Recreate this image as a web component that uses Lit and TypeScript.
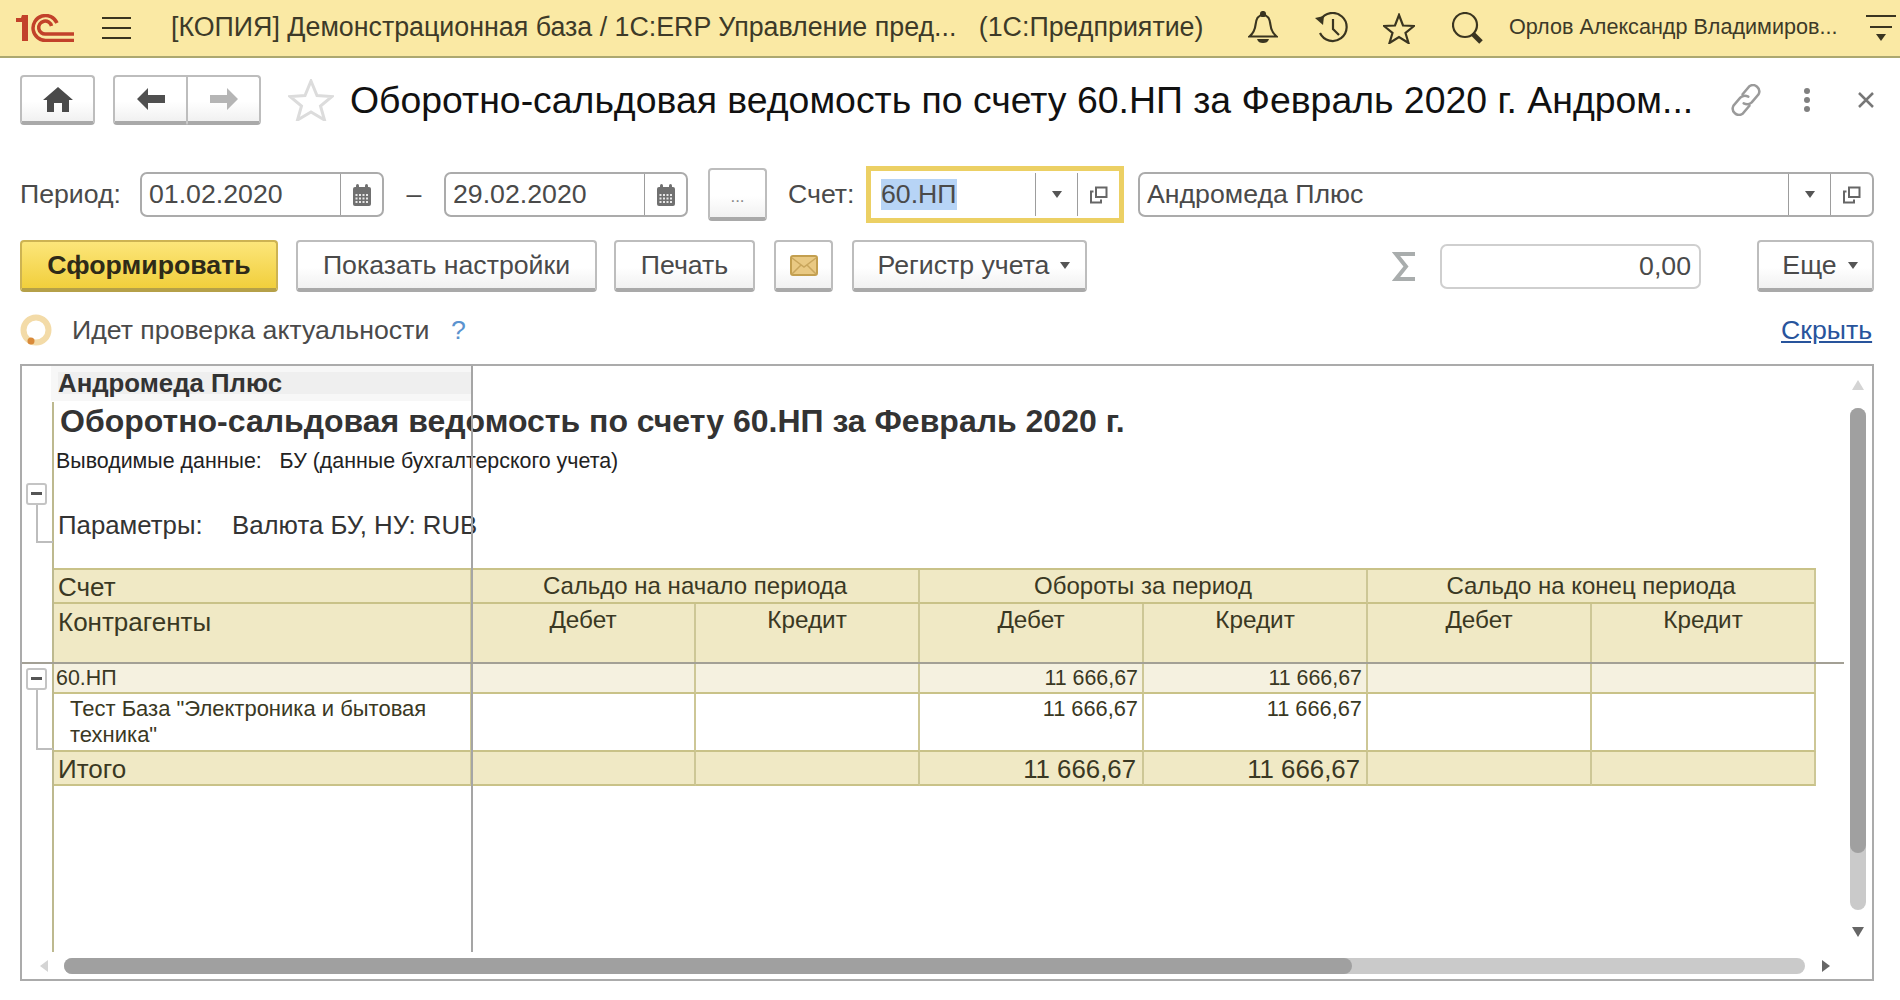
import { css, html, LitElement } from "lit";
import { customElement } from "lit/decorators.js";

const linkBox = html`<svg width="20" height="20" viewBox="0 0 20 20" fill="none" stroke="#666" stroke-width="2">
  <path d="M7 2.500h10.500v9.500h-10.500z" /><path d="M4.500 6.500h-2.500v11h10v-3" />
</svg>`;

const calendar = html`<svg width="18" height="24" viewBox="0 0 18 24">
  <path fill="#707070" d="M2 4h14a2 2 0 0 1 2 2v15a2 2 0 0 1-2 2h-14a2 2 0 0 1-2-2v-15a2 2 0 0 1 2-2z" />
  <rect x="3" y="1" width="3" height="6" rx="1.500" fill="#707070" />
  <rect x="12" y="1" width="3" height="6" rx="1.500" fill="#707070" />
  <path stroke="#e8e8e8" stroke-width="2" stroke-dasharray="2 1.500" d="M2.500 12h13M2.500 15.500h13M2.500 19h13" />
</svg>`;

const caret = html`<span class="caret"></span>`;

@customElement("app-root")
export class AppRoot extends LitElement {
  static get styles() {
    return css`
      :host {
        display: block;
        width: 1900px;
        height: 1000px;
        overflow: hidden;
        background: #fff;
        color: #4a4a4a;
        font-family: "Liberation Sans", Arial, sans-serif;
        font-size: 26.700px;
      }
      svg {
        display: block;
        flex: none;
      }
      .row {
        display: flex;
        align-items: center;
        padding-left: 20px;
        white-space: nowrap;
      }
      .caret {
        display: inline-block;
        flex: none;
        border: 5px solid transparent;
        border-top: 7px solid #555;
        border-bottom: 0;
      }

      /* top bar */
      .topbar {
        display: flex;
        align-items: center;
        height: 56px;
        padding-left: 16px;
        background: #fae9a4;
        border-bottom: 2px solid #aca870;
        color: #3d3a28;
        white-space: nowrap;
      }
      .burger {
        margin-left: 28px;
      }
      .app-title {
        flex: none;
        margin: -2px 0 0 39px;
        width: 1077px;
        font-size: 26.800px;
      }
      .clock {
        margin-left: 37px;
      }
      .fav {
        margin-left: 34px;
      }
      .find {
        margin-left: 37px;
      }
      .user {
        flex: none;
        margin: -2px 0 0 25px;
        width: 357px;
        font-size: 21.600px;
      }

      /* second row */
      .nav-row {
        margin-top: 17px;
        height: 50px;
      }
      .btn {
        display: flex;
        align-items: center;
        justify-content: center;
        box-sizing: border-box;
        height: 52px;
        flex: none;
        gap: 11px;
        background: linear-gradient(#fff 55%, #f1f1f1);
        border: 2px solid #bdbdbd;
        border-bottom: 4px solid #a9a9a9;
        border-radius: 4px;
        color: #4a4a4a;
      }
      .home {
        width: 75px;
        height: 50px;
      }
      .pair {
        display: flex;
        margin-left: 18px;
      }
      .pair .btn {
        width: 74px;
        height: 50px;
      }
      .pair .btn:first-child {
        border-radius: 4px 0 0 4px;
        border-right-width: 1px;
      }
      .pair .btn:last-child {
        border-radius: 0 4px 4px 0;
        border-left-width: 1px;
      }
      .outline-star {
        margin-left: 27px;
      }
      .form-title {
        flex: none;
        margin-left: 16px;
        width: 1380px;
        color: #111;
        font-size: 37.400px;
      }
      .dots {
        margin-left: 40px;
      }
      .close {
        margin-left: 46px;
      }

      /* period row */
      .filter-row {
        margin-top: 41px;
        height: 57px;
      }
      .period-label {
        width: 120px;
      }
      .field {
        display: flex;
        align-items: stretch;
        box-sizing: border-box;
        height: 45px;
        flex: none;
        background: #fff;
        border: 2px solid #ababab;
        border-radius: 7px;
      }
      .field .value {
        flex: 1;
        display: flex;
        align-items: center;
        padding-left: 7px;
      }
      .field .tool {
        display: flex;
        align-items: center;
        justify-content: center;
        border-left: 1px solid #9d9d9d;
      }
      .date {
        width: 244px;
      }
      .date .tool {
        width: 41px;
      }
      .dash {
        width: 60px;
        text-align: center;
      }
      .dots-btn {
        width: 59px;
        height: 53px;
        margin-left: 20px;
        padding-top: 6px;
        box-sizing: border-box;
        font-size: 17px;
        color: #888;
      }
      .acc-label {
        margin-left: 21px;
        width: 78px;
      }
      .focus {
        box-sizing: border-box;
        display: flex;
        flex: none;
        align-items: stretch;
        width: 258px;
        height: 57px;
        border: 5px solid #ecd064;
        background: #fff;
      }
      .focus .value {
        flex: 1;
        display: flex;
        align-items: center;
        padding-left: 10px;
      }
      .selected {
        background: #b7d4f6;
        height: 31px;
        line-height: 31px;
      }
      .focus .tool {
        display: flex;
        align-items: center;
        justify-content: center;
        width: 41px;
        border-left: 1px solid #9d9d9d;
        margin: 2px 0;
      }
      .wide {
        width: 736px;
        margin-left: 14px;
      }
      .wide .tool {
        width: 41px;
      }

      /* command row */
      .cmd-row {
        margin-top: 17px;
        height: 52px;
      }
      .primary {
        width: 258px;
        background: linear-gradient(#fce67a, #f1cf3c);
        border-color: #cdb352;
        border-bottom-color: #b5a048;
        color: #2e2a18;
        font-weight: bold;
      }
      .settings {
        width: 301px;
        margin-left: 18px;
      }
      .print {
        width: 141px;
        margin-left: 17px;
      }
      .mail {
        width: 59px;
        margin-left: 19px;
      }
      .register {
        width: 235px;
        margin-left: 19px;
        padding-left: 9px;
      }
      .sigma {
        margin-left: 305px;
      }
      .total {
        box-sizing: border-box;
        width: 261px;
        height: 45px;
        margin-left: 25px;
        justify-content: flex-end;
        align-items: center;
        padding-right: 8px;
        border-color: #cfcfcf;
      }
      .more {
        width: 117px;
        margin-left: 56px;
        padding-left: 9px;
      }

      /* status row */
      .status-row {
        margin-top: 22px;
        height: 32px;
      }
      .status {
        margin-left: 20px;
        width: 379px;
      }
      .help {
        color: #5b93cf;
        width: 1330px;
      }
      .hide {
        color: #28549c;
        text-decoration: underline;
      }

      /* report */
      .frame {
        position: relative;
        box-sizing: border-box;
        width: 1854px;
        height: 617px;
        margin: 18px 0 0 20px;
        border: 2px solid #ababab;
        overflow: hidden;
        background: #fff;
      }
      .sheet {
        padding-left: 32px;
        color: #333;
        white-space: nowrap;
      }
      .org {
        box-sizing: border-box;
        width: 420px;
        height: 35px;
        margin-left: -3px;
        padding: 6px 0 7px 7px;
        background: #f7f7f7;
      }
      .org div {
        height: 22px;
        line-height: 22px;
        background: #efefef;
        font-size: 25.800px;
        font-weight: bold;
      }
      .report-title {
        height: 42px;
        line-height: 40px;
        padding-left: 6px;
        font-size: 32px;
        font-weight: bold;
      }
      .output {
        height: 38px;
        line-height: 36px;
        padding-left: 2px;
        font-size: 21.400px;
        color: #222;
      }
      .params {
        display: flex;
        align-items: center;
        height: 88px;
        padding-left: 4px;
        font-size: 25.800px;
      }
      .params span:first-child {
        width: 174px;
      }
      .table {
        display: grid;
        grid-template-columns: 418px repeat(6, 224px);
        grid-template-rows: 34px 60px 30px 58px 34px;
        border-top: 2px solid #c9c288;
        margin-top: -1px;
        width: 1762px;
      }
      .cell {
        box-sizing: border-box;
        border-right: 2px solid #cdc796;
        border-bottom: 2px solid #c9c288;
        padding: 0 4px;
        font-size: 24px;
        color: #3a3823;
        line-height: 31px;
        overflow: hidden;
      }
      .first {
        border-left: 2px solid #c9c288;
        margin-left: -2px;
        width: 420px;
        font-size: 26px;
        line-height: 34px;
      }
      .head {
        background: #f0e9c5;
      }
      .tall {
        line-height: 36px;
      }
      .group {
        background: #f5f1e0;
        font-size: 21.400px;
        line-height: 28px;
      }
      .first.group {
        padding-left: 2px;
        font-size: 21.400px;
        line-height: 28px;
      }
      .detail {
        background: #fff;
        font-size: 21.800px;
        line-height: 26px;
        padding-top: 2px;
      }
      .first.detail {
        padding-left: 16px;
        font-size: 22px;
        line-height: 26px;
        white-space: normal;
      }
      .total-row {
        font-size: 25.800px;
        line-height: 34px;
        padding-right: 6px;
      }
      .span2 {
        grid-column: span 2;
      }
      .center {
        text-align: center;
      }
      .subhead {
        font-size: 24.300px;
        line-height: 32px;
      }
      .num {
        text-align: right;
      }

      /* frozen lines, outline marks and scrollbars lie over the sheet */
      .vline {
        position: absolute;
        width: 2px;
      }
      .vline.grid {
        left: 30px;
        top: 36px;
        height: 550px;
        background: #bdb98f;
      }
      .vline.frozen {
        left: 449px;
        top: 0;
        height: 586px;
        background: #a5a5a5;
      }
      .hline {
        position: absolute;
        left: 0;
        top: 296px;
        width: 1822px;
        height: 2px;
        background: #a3a095;
      }
      .toggle {
        position: absolute;
        left: 4px;
        box-sizing: border-box;
        width: 21px;
        height: 22px;
        background: #fff;
        border: 2px solid #c4c4c4;
        border-radius: 3px;
      }
      .toggle::after {
        content: "";
        position: absolute;
        left: 3px;
        top: 7px;
        width: 11px;
        height: 3px;
        background: #555;
      }
      .t1 {
        top: 117px;
      }
      .t2 {
        top: 302px;
      }
      .bracket {
        position: absolute;
        left: 14px;
        width: 15px;
        border-left: 2px solid #bdbdbd;
        border-bottom: 2px solid #bdbdbd;
      }
      .b1 {
        top: 139px;
        height: 36px;
      }
      .b2 {
        top: 324px;
        height: 58px;
      }
      .track {
        position: absolute;
        background: #cacaca;
        border-radius: 8px;
      }
      .thumb {
        background: #a0a0a0;
        border-radius: 8px;
      }
      .v-track {
        left: 1828px;
        top: 42px;
        width: 16px;
        height: 502px;
      }
      .v-track .thumb {
        height: 445px;
      }
      .h-track {
        left: 42px;
        top: 592px;
        width: 1741px;
        height: 16px;
      }
      .h-track .thumb {
        width: 1288px;
        height: 16px;
      }
      .arrow {
        position: absolute;
        width: 0;
        height: 0;
        border: 6px solid transparent;
      }
      .up {
        left: 1830px;
        top: 14px;
        border-top: 0;
        border-bottom: 10px solid #d4d4d4;
      }
      .down {
        left: 1830px;
        top: 561px;
        border-bottom: 0;
        border-top: 10px solid #666;
      }
      .left {
        left: 18px;
        top: 594px;
        border-left: 0;
        border-right: 8px solid #d4d4d4;
      }
      .right {
        left: 1800px;
        top: 594px;
        border-right: 0;
        border-left: 8px solid #666;
      }
    `;
  }

  renderTopbar() {
    return html`<div class="topbar">
      <svg width="58" height="28" viewBox="0 0 58 28" fill="none" stroke="#c2412a">
        <path fill="#c2412a" stroke="none" d="M0 4h5l1-3h6v26h-6v-19h-6z" />
        <path stroke-width="3.500" d="M41 9A12.500 12.500 0 1 0 30 26.500H58" />
        <path stroke-width="3.500" d="M35.500 12A6.500 6.500 0 1 0 30 20H58" />
      </svg>
      <svg class="burger" width="30" height="24" viewBox="0 0 30 24" stroke="#3a3520" stroke-width="2">
        <path d="M0 2h29M0 12h29M0 22h29" />
      </svg>
      <div class="app-title">[КОПИЯ] Демонстрационная база / 1С:ERP Управление пред...&nbsp;&nbsp;&nbsp;(1С:Предприятие)</div>
      <svg width="30" height="34" viewBox="0 0 30 34" fill="none" stroke="#3a3520" stroke-width="2.200">
        <circle cx="15" cy="3" r="2" fill="#3a3520" />
        <path d="M15 4c-6 0-7 5-7.500 10s-2 8-6 11.500h27c-4-3.500-5.500-6.500-6-11.500s-1.500-10-7.500-10z" />
        <path fill="#3a3520" stroke="none" d="M9 28h12c-1 3-3 4-6 4s-5-1-6-4z" />
      </svg>
      <svg class="clock" width="34" height="32" viewBox="0 0 34 32" fill="none" stroke="#3a3520" stroke-width="2.200">
        <path d="M5.500 8A14 14 0 1 1 5 21" />
        <path fill="#3a3520" stroke="none" d="M0 6l9-2-1 9z" />
        <path d="M18 7v10l6 6" />
      </svg>
      <svg class="fav" width="32" height="31" viewBox="0 0 32 31" fill="none" stroke="#3a3520" stroke-width="2.200">
        <path d="M16 2l4 10.500 11 .5-8.500 7 3 10-9.500-6-9.500 6 3-10-8.500-7 11-.5z" />
      </svg>
      <svg class="find" width="32" height="32" viewBox="0 0 32 32" fill="none" stroke="#3a3520">
        <circle cx="13" cy="13" r="12" stroke-width="2.200" />
        <path stroke-width="5" d="M21 22l8 8" />
      </svg>
      <div class="user">Орлов Александр Владимиров...</div>
      <svg width="30" height="30" viewBox="0 0 30 30" stroke="#3a3520" stroke-width="2">
        <path d="M0 3h30M4 14h22" />
        <path fill="#3a3520" stroke="none" d="M10 21h10l-5 7z" />
      </svg>
    </div>`;
  }

  renderNav() {
    return html`<div class="row nav-row">
      <div class="btn home">
        <svg width="30" height="25" viewBox="0 0 30 25" fill="#4a4a4a">
          <path d="M15 0l15 13h-4v12h-7v-9h-8v9h-7v-12h-4z" />
        </svg>
      </div>
      <div class="pair">
        <div class="btn">
          <svg width="28" height="22" viewBox="0 0 28 22" fill="#4f4f4f"><path d="M0 11l11-11v7h17v8h-17v7z" /></svg>
        </div>
        <div class="btn">
          <svg width="28" height="22" viewBox="0 0 28 22" fill="#b5b5b5"><path d="M28 11l-11-11v7h-17v8h17v7z" /></svg>
        </div>
      </div>
      <svg class="outline-star" width="46" height="42" viewBox="0 0 46 42" fill="none" stroke="#dcdcdc" stroke-width="3">
        <path d="M23 2l6 14.500 15 1-11.500 9.500 4 14-13.500-8-13.500 8 4-14-11.500-9.500 15-1z" />
      </svg>
      <div class="form-title">Оборотно-сальдовая ведомость по счету 60.НП за Февраль 2020 г. Андром...</div>
      <svg width="32" height="32" viewBox="3 2 26 28" fill="none" stroke="#9a9a9a" stroke-width="2.200" stroke-linecap="round">
        <path d="M13 11l6-7a5.500 5.500 0 0 1 8 7l-6 7c-2 2-5 2-7 1" />
        <path d="M19 21l-6 7a5.500 5.500 0 0 1-8-7l6-7c2-2 5-2 7-1" />
      </svg>
      <svg class="dots" width="10" height="26" viewBox="0 0 10 26" fill="#808080">
        <circle cx="5" cy="4" r="3" /><circle cx="5" cy="13" r="3" /><circle cx="5" cy="22" r="3" />
      </svg>
      <svg class="close" width="16" height="16" viewBox="0 0 16 16" stroke="#777" stroke-width="2.500">
        <path d="M1 1l14 14M15 1l-14 14" />
      </svg>
    </div>`;
  }

  renderFilters() {
    return html`<div class="row filter-row">
      <span class="period-label">Период:</span>
      <div class="field date">
        <div class="value">01.02.2020</div>
        <div class="tool">${calendar}</div>
      </div>
      <div class="dash">–</div>
      <div class="field date">
        <div class="value">29.02.2020</div>
        <div class="tool">${calendar}</div>
      </div>
      <div class="btn dots-btn">...</div>
      <span class="acc-label">Счет:</span>
      <div class="focus">
        <div class="value"><span class="selected">60.НП</span></div>
        <div class="tool">${caret}</div>
        <div class="tool">${linkBox}</div>
      </div>
      <div class="field wide">
        <div class="value">Андромеда Плюс</div>
        <div class="tool">${caret}</div>
        <div class="tool">${linkBox}</div>
      </div>
    </div>`;
  }

  renderCommands() {
    return html`<div class="row cmd-row">
      <div class="btn primary">Сформировать</div>
      <div class="btn settings">Показать настройки</div>
      <div class="btn print">Печать</div>
      <div class="btn mail">
        <svg width="28" height="21" viewBox="0 0 28 21">
          <rect x="1" y="1" width="26" height="19" rx="2" fill="#e9c983" stroke="#c39f4f" stroke-width="2" />
          <path d="M2 3l12 9 12-9M2 19l9-9M26 19l-9-9" fill="none" stroke="#c9a65c" stroke-width="1.500" />
        </svg>
      </div>
      <div class="btn register">Регистр учета ${caret}</div>
      <svg class="sigma" width="23" height="29" viewBox="0 0 23 29" fill="none" stroke="#a9adad" stroke-width="4">
        <path d="M23 2h-19l10 12.500-10 12.500h19" />
      </svg>
      <div class="field total">0,00</div>
      <div class="btn more">Еще ${caret}</div>
    </div>`;
  }

  renderStatus() {
    return html`<div class="row status-row">
      <svg width="32" height="32" viewBox="0 0 32 32" fill="none">
        <circle cx="16" cy="16" r="12.500" stroke="#f3dba8" stroke-width="6" />
        <circle cx="11" cy="27" r="3.500" fill="#d98a3a" />
      </svg>
      <span class="status">Идет проверка актуальности</span>
      <span class="help">?</span>
      <span class="hide">Скрыть</span>
    </div>`;
  }

  renderTable() {
    const amount = "11 666,67";
    const empty = (cls: string, n: number) =>
      Array.from({ length: n }, () => html`<div class="cell ${cls}"></div>`);
    return html`<div class="table">
      <div class="cell head first">Счет</div>
      <div class="cell head span2 center">Сальдо на начало периода</div>
      <div class="cell head span2 center">Обороты за период</div>
      <div class="cell head span2 center">Сальдо на конец периода</div>

      <div class="cell head first tall">Контрагенты</div>
      ${["Дебет", "Кредит", "Дебет", "Кредит", "Дебет", "Кредит"].map(
        (t) => html`<div class="cell head subhead center">${t}</div>`
      )}

      <div class="cell group first">60.НП</div>
      ${empty("group", 2)}
      <div class="cell group num">${amount}</div>
      <div class="cell group num">${amount}</div>
      ${empty("group", 2)}

      <div class="cell detail first">Тест База "Электроника и бытовая техника"</div>
      ${empty("detail", 2)}
      <div class="cell detail num">${amount}</div>
      <div class="cell detail num">${amount}</div>
      ${empty("detail", 2)}

      <div class="cell head first">Итого</div>
      ${empty("head", 2)}
      <div class="cell head total-row num">${amount}</div>
      <div class="cell head total-row num">${amount}</div>
      ${empty("head", 2)}
    </div>`;
  }

  render() {
    return html`
      ${this.renderTopbar()} ${this.renderNav()} ${this.renderFilters()}
      ${this.renderCommands()} ${this.renderStatus()}
      <div class="frame">
        <div class="sheet">
          <div class="org"><div>Андромеда Плюс</div></div>
          <div class="report-title">Оборотно-сальдовая ведомость по счету 60.НП за Февраль 2020 г.</div>
          <div class="output">Выводимые данные:&nbsp;&nbsp;&nbsp;БУ (данные бухгалтерского учета)</div>
          <div class="params"><span>Параметры:</span><span>Валюта БУ, НУ: RUB</span></div>
          ${this.renderTable()}
        </div>
        <div class="vline grid"></div>
        <div class="vline frozen"></div>
        <div class="hline"></div>
        <div class="toggle t1"></div>
        <div class="bracket b1"></div>
        <div class="toggle t2"></div>
        <div class="bracket b2"></div>
        <div class="arrow up"></div>
        <div class="track v-track"><div class="thumb"></div></div>
        <div class="arrow down"></div>
        <div class="arrow left"></div>
        <div class="track h-track"><div class="thumb"></div></div>
        <div class="arrow right"></div>
      </div>
    `;
  }
}
